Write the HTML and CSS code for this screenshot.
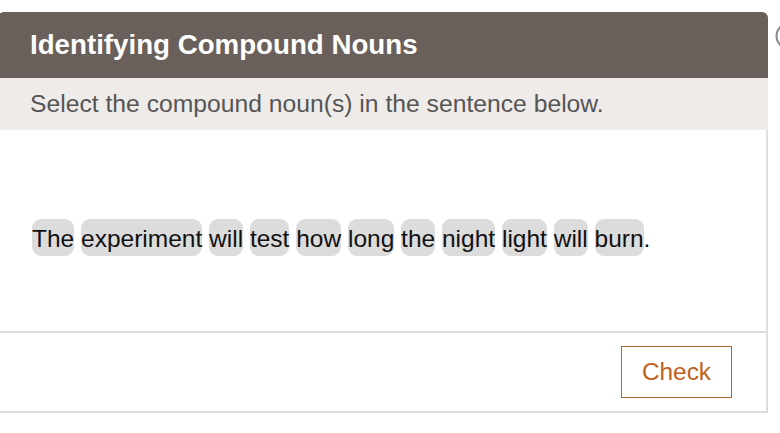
FILE: index.html
```html
<!DOCTYPE html>
<html lang="en">
<head>
<meta charset="utf-8">
<title>Identifying Compound Nouns</title>
<link rel="stylesheet" href="styles.css">
</head>
<body>
<div class="page">
  <div class="card">
    <div class="card-header">Identifying Compound Nouns</div>
    <div class="card-instructions">Select the compound noun(s) in the sentence below.</div>
    <div class="card-body">
      <p class="sentence"><span class="word">The</span> <span class="word">experiment</span> <span class="word">will</span> <span class="word">test</span> <span class="word">how</span> <span class="word">long</span> <span class="word">the</span> <span class="word">night</span> <span class="word">light</span> <span class="word">will</span> <span class="word">burn</span>.</p>
    </div>
    <div class="card-footer">
      <button class="check-btn" type="button">Check</button>
    </div>
  </div>
  <svg class="side-icon" width="30" height="30" viewBox="0 0 30 30" aria-hidden="true">
    <circle cx="15" cy="15" r="12.5" fill="none" stroke="#8a8a8a" stroke-width="2"/>
  </svg>
</div>
</body>
</html>
```
FILE: styles.css
```css
html, body {
  margin: 0;
  padding: 0;
  background: #ffffff;
  overflow: hidden;
}

body {
  font-family: "Liberation Sans", Arial, sans-serif;
}

.page {
  position: relative;
  padding-top: 12px;
  width: 780px;
  height: 433px;
  box-sizing: border-box;
}

.card {
  width: 770px;
  margin-left: -2px;
  box-sizing: border-box;
  border: 2px solid #dddddd;
  border-top: none;
  border-radius: 6px 6px 0 0;
  background: #ffffff;
}

.card-header {
  background: #6a605b;
  color: #ffffff;
  font-weight: bold;
  font-size: 27.7px;
  height: 66px;
  display: flex;
  align-items: center;
  padding-left: 32px;
  margin: 0 -2px;
  border-radius: 6px 6px 0 0;
}

.card-instructions {
  background: #efebe9;
  color: #555555;
  font-size: 24.7px;
  height: 52px;
  display: flex;
  align-items: center;
  padding-left: 32px;
  margin: 0 -2px 0 -2px;
}

.card-body {
  height: 203px;
  display: flex;
  align-items: center;
  padding-left: 32px;
  padding-top: 16px;
  box-sizing: border-box;
  border-bottom: 2px solid #dddddd;
}

.sentence {
  margin: 0;
  font-size: 24.5px;
  color: #111111;
  line-height: 37px;
}

.word {
  background: #dcdcdc;
  border-radius: 9px;
  padding: 6px 0 4px;
}

.card-footer {
  height: 78px;
  display: flex;
  align-items: flex-start;
  justify-content: flex-end;
  padding-top: 13px;
  padding-right: 34px;
  box-sizing: border-box;
}

.check-btn {
  width: 111px;
  height: 52px;
  background: #ffffff;
  border: 1px solid #b06a2c;
  color: #c0621c;
  font-family: "Liberation Sans", Arial, sans-serif;
  font-size: 24.4px;
  padding: 0;
  cursor: pointer;
}

.side-icon {
  position: absolute;
  left: 774px;
  top: 21px;
}
```
